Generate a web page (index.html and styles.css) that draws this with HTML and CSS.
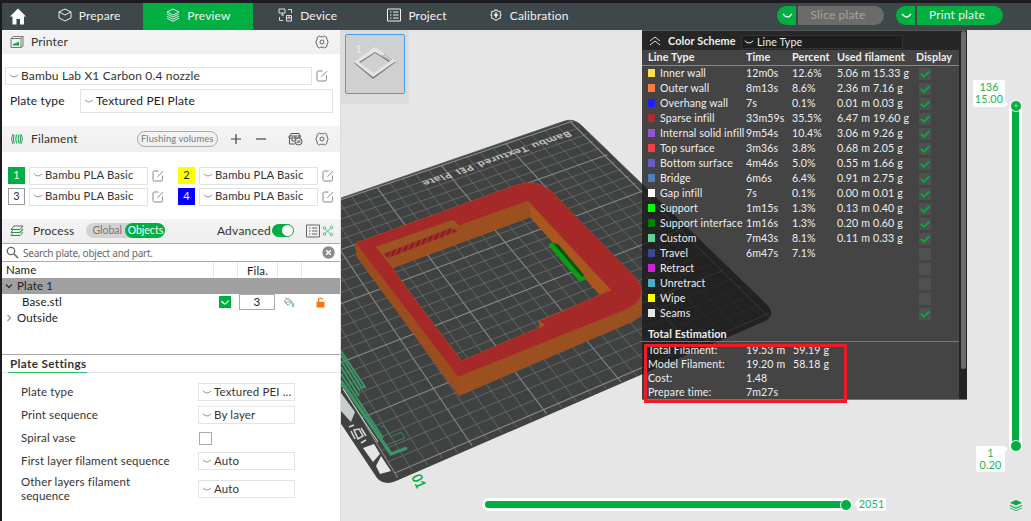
FILE: index.html
```html
<!DOCTYPE html>
<html lang="en">
<head>
<meta charset="utf-8">
<title>Base.stl</title>
<link rel="stylesheet" href="styles.css">
</head>
<body>
<svg width="0" height="0" class="defs">
  <symbol id="chev" viewBox="0 0 10 6"><path d="M.8 1.800Q3 4 5 4T9.200 1.800" fill="none" stroke="currentColor"/></symbol>
  <symbol id="edit" viewBox="0 0 12 12"><path d="M6.500 1H2.500Q1 1 1 2.500V9.500Q1 11 2.500 11H9Q10.500 11 10.500 9.500V5.500M5.500 6.800L11 1.200" fill="none" stroke="#858585"/></symbol>
  <symbol id="gear" viewBox="0 0 14 14"><path d="M4.300 1L5.300 1.700H8.700L9.700 1L11.800 2.500V4L13.200 7L11.800 10V11.500L9.700 13L8.700 12.300H5.300L4.300 13L2.200 11.500V10L.8 7L2.200 4V2.500Z" fill="none" stroke="#666"/><circle cx="7" cy="7" r="2" fill="none" stroke="#666"/></symbol>
  <symbol id="layers" viewBox="0 0 14 14"><path d="M7 1L13 4L7 7L1 4ZM1 6L7 9L13 6M1 8.200L7 11.200L13 8.200M1 10.300L7 13.300L13 10.300" fill="none" stroke="currentColor" stroke-width=".9"/></symbol>
  <symbol id="list" viewBox="0 0 14 14"><path d="M.5 1H13.500V13H.5ZM3 4H4.500M6 4H11.500M3 7H4.500M6 7H11.500M3 10H4.500M6 10H11.500" fill="none" stroke="currentColor"/></symbol>
  <symbol id="tick" viewBox="0 0 12 12"><path d="M2 6L5 8.800L10.200 3.500" fill="none" stroke="currentColor" stroke-width="1.800"/></symbol>
</svg>
<div class="app">
  <header class="topbar">
    <div class="home"><svg width="18" height="17" viewBox="0 0 18 17"><path d="M9 .5L17 8.500H15V16.500H11V11H7.500V16.500H3.500V8.500H1Z" fill="#fff"/></svg></div>
    <nav class="tabs">
      <a class="tab"><svg width="14" height="14" viewBox="0 0 14 14"><path d="M7 1L13 3.800V10L7 13L1 10V3.800ZM1 3.800L7 7L13 3.800" fill="none" stroke="#eee"/></svg>Prepare</a>
      <a class="tab active"><svg width="14" height="14"><use href="#layers"/></svg>Preview</a>
      <a class="tab"><svg width="15" height="14" viewBox="0 0 15 14"><path d="M1 1H7V5H1ZM3 7H6M4.500 5V7M10 1.500H13.500V5M1.500 9V12.500H5M8.500 7.500H13.500V13H8.500ZM8.500 10H13.500M11 7.500V10" fill="none" stroke="#ddd"/></svg>Device</a>
      <a class="tab"><svg width="14" height="14"><use href="#list"/></svg>Project</a>
      <a class="tab cal"><svg width="12" height="12" viewBox="0 0 14 14"><path d="M7 .8L9 2.300L12 3V6L13 7L12 8V11L9 11.800L7 13.200L5 11.800L2 11V8L1 7L2 6V3L5 2.300Z" fill="none" stroke="#eee" stroke-width="1.200"/><path d="M7 3.800V10.200M4.500 7H9.500" stroke="#eee" stroke-width="1.800"/></svg>Calibration</a>
    </nav>
    <div class="actions">
      <div class="split"><b class="drop"><svg width="11" height="7" viewBox="0 0 11 7"><path d="M1 2Q3.500 5 5.500 5T10 2" fill="none" stroke="#fff" stroke-width="1.300"/></svg></b><span class="act off">Slice plate</span></div>
      <div class="split"><b class="drop"><svg width="11" height="7" viewBox="0 0 11 7"><path d="M1 2Q3.500 5 5.500 5T10 2" fill="none" stroke="#fff" stroke-width="1.300"/></svg></b><span class="act">Print plate</span></div>
    </div>
  </header>

  <main class="work">
    <aside class="side">
      <div class="bar printer"><svg width="14" height="14" viewBox="0 0 14 14"><path d="M1 3.500L3.500 1.500H13V11L11 12.500H1ZM1 3.500H11V12.500M11 3.500L13 1.500" fill="none" stroke="#777"/><path d="M3 10.500V9L6 8L9 6.500V10.500Z" fill="#00ae42"/></svg><h2>Printer</h2><svg class="end" width="14" height="14"><use href="#gear"/></svg></div>
      <div class="row machine"><div class="select"><svg width="10" height="6"><use href="#chev"/></svg>Bambu Lab X1 Carbon 0.4 nozzle</div><svg width="12" height="12"><use href="#edit"/></svg></div>
      <div class="row plate"><label>Plate type</label><div class="select"><svg width="10" height="6"><use href="#chev"/></svg>Textured PEI Plate</div></div>
      <div class="bar filament"><svg width="14" height="14" viewBox="0 0 14 14"><path d="M3 2Q0 7 3 12M11 2Q14 7 11 12" fill="none" stroke="#777"/><path d="M4 2.500Q3 7 4 11.500M6.500 2.500Q5 7 6.500 11.500M8.500 2.500Q7.500 7 9 11.500M10 3Q11 7 10 11" fill="none" stroke="#00ae42"/></svg><h2>Filament</h2>
        <span class="flush">Flushing volumes</span>
        <svg class="plus" width="12" height="12" viewBox="0 0 12 12"><path d="M1 6H11M6 1V11" stroke="#444" stroke-width="1.200"/></svg>
        <svg class="minus" width="12" height="12" viewBox="0 0 12 12"><path d="M1 6H11" stroke="#444" stroke-width="1.200"/></svg>
        <svg class="ams" width="15" height="14" viewBox="0 0 15 14"><path d="M2 4L3 1.500H11L12 4M1 4H13M1 4V6H12V4M1.500 6V12H7M4 6V9M4 9H7M7 4V7" fill="none" stroke="#555"/><circle cx="10.500" cy="9.500" r="3.500" fill="#f3f3f3" stroke="#555"/><path d="M8.700 9H12.300L11.300 8M12.300 10.300H8.700L9.700 11.300" fill="none" stroke="#555" stroke-width=".8"/></svg>
        <svg width="14" height="14"><use href="#gear"/></svg></div>
      <div class="spools">
        <div class="spool"><b class="sw s1">1</b><div class="select"><svg width="10" height="6"><use href="#chev"/></svg>Bambu PLA Basic</div><svg width="12" height="12"><use href="#edit"/></svg></div>
        <div class="spool"><b class="sw s2">2</b><div class="select"><svg width="10" height="6"><use href="#chev"/></svg>Bambu PLA Basic</div><svg width="12" height="12"><use href="#edit"/></svg></div>
        <div class="spool"><b class="sw s3">3</b><div class="select"><svg width="10" height="6"><use href="#chev"/></svg>Bambu PLA Basic</div><svg width="12" height="12"><use href="#edit"/></svg></div>
        <div class="spool"><b class="sw s4">4</b><div class="select"><svg width="10" height="6"><use href="#chev"/></svg>Bambu PLA Basic</div><svg width="12" height="12"><use href="#edit"/></svg></div>
      </div>
      <div class="bar process"><svg width="14" height="14" viewBox="0 0 14 14"><path d="M4 2H13L10 5.500H1Z" fill="none" stroke="#666"/><path d="M1 8.500H10L13 5" fill="none" stroke="#00ae42" stroke-width="1.200"/><path d="M1 8.500L2.500 6.500M1 11.500H10L13 8M1 11.500L2.500 9.500" fill="none" stroke="#666"/></svg><h2>Process</h2>
        <div class="seg"><span>Global</span><span class="on">Objects</span></div>
        <span class="adv">Advanced</span><i class="toggle"></i>
        <svg class="plist" width="14" height="14"><use href="#list"/></svg>
        <svg class="tune" width="12" height="12" viewBox="0 0 12 12"><path d="M3.500 4L8.500 9M3.500 8L8.500 3.500" fill="none" stroke="#58bd80"/><g fill="none" stroke="#58bd80"><circle cx="2.500" cy="3" r="1.300"/><circle cx="2.500" cy="9" r="1.300"/><circle cx="9.500" cy="2.500" r="1.300"/><circle cx="9.500" cy="9.500" r="1.300"/></g></svg></div>
      <div class="search"><svg width="13" height="13" viewBox="0 0 13 13"><circle cx="5" cy="5" r="3.700" fill="none" stroke="#666" stroke-width="1.300"/><path d="M8 8L12 12" stroke="#666" stroke-width="1.600"/></svg><span>Search plate, object and part.</span><svg class="end" width="13" height="13" viewBox="0 0 13 13"><circle cx="6.500" cy="6.500" r="6.200" fill="#8b8b8b"/><path d="M4.200 4.200L8.800 8.800M8.800 4.200L4.200 8.800" stroke="#fff" stroke-width="1.400"/></svg></div>
      <div class="tree">
        <div class="tr th"><span>Name</span><span></span><span>Fila.</span><span></span><span></span></div>
        <div class="tr sel"><span><svg width="8" height="8" viewBox="0 0 8 8"><path d="M1 2.500L4 5.500L7 2.500" fill="none" stroke="#333" stroke-width="1.300"/></svg>Plate 1</span></div>
        <div class="tr item"><span>Base.stl</span><span><i class="check"><svg width="12" height="12" viewBox="0 0 12 12"><path d="M2.500 5Q5 8 6 8T9.500 4.500" fill="none" stroke="#fff" stroke-width="1.200"/></svg></i></span><span><i class="num">3</i></span>
          <span><svg width="12" height="12" viewBox="0 0 12 12"><path d="M2 1L9 7M1 5L5 2L9.500 6L5 9.500Z" fill="none" stroke="#999" stroke-width=".8"/><path d="M2 6H8M10 7Q12 11 10 11T10 7M2.500 6.500L5 9" fill="none" stroke="#37bf6b" stroke-width=".8"/></svg></span>
          <span><svg width="9" height="11" viewBox="0 0 9 11"><path d="M2.500 5V3Q2.500 1 4.500 1T6.500 2.500" fill="none" stroke="#ff7010" stroke-width="1.200"/><path d="M.5 4.800H8.500V10.500H.5Z" fill="#ff7010"/></svg></span></div>
        <div class="tr"><span><svg width="8" height="8" viewBox="0 0 8 8"><path d="M2.500 1L5.500 4L2.500 7" fill="none" stroke="#999" stroke-width="1.200"/></svg>Outside</span></div>
      </div>
      <h3><span>Plate Settings</span></h3>
      <div class="settings">
        <label>Plate type</label><div class="select"><svg width="10" height="6"><use href="#chev"/></svg>Textured PEI ...</div>
        <label>Print sequence</label><div class="select"><svg width="10" height="6"><use href="#chev"/></svg>By layer</div>
        <label>Spiral vase</label><i class="box"></i>
        <label>First layer filament sequence</label><div class="select"><svg width="10" height="6"><use href="#chev"/></svg>Auto</div>
        <label>Other layers filament<br>sequence</label><div class="select"><svg width="10" height="6"><use href="#chev"/></svg>Auto</div>
      </div>
    </aside>

    <section class="view">
      <svg class="scene" width="690" height="491" viewBox="341 30 690 491">
        <defs>
          <pattern id="top" width="3" height="3" patternUnits="userSpaceOnUse" patternTransform="rotate(-20)"><rect width="3" height="3" fill="#ac2a2a"/><path d="M0 1H3" stroke="#932424" stroke-width=".8"/></pattern>
          <pattern id="wall" width="3" height="2.500" patternUnits="userSpaceOnUse" patternTransform="rotate(-20)"><rect width="3" height="3" fill="#a05321"/><path d="M0 1H3" stroke="#8e471a" stroke-width=".7"/></pattern>
          <pattern id="ridge" width="5" height="9" patternUnits="userSpaceOnUse" patternTransform="rotate(20)"><rect width="5" height="9" fill="#a82a2a"/><path d="M1 0V9" stroke="#6e2020" stroke-width="1.600"/></pattern>
        </defs>
        <path d="M300 212L565 121Q574 118 582 126L767 305Q776 315 765 321L396 481Q384 486 377 478L300 362Z" fill="#404242"/>
        <g id="grid" fill="none"></g>
        <path d="M341 198L565 121Q574 118 582 126L767 305Q776 315 765 321" fill="none" stroke="#5d5f5f" stroke-width="1"/>
        <text class="platename" transform="matrix(-.945 .325 -.5 -.5 568.500 131)" textLength="156" lengthAdjust="spacingAndGlyphs">Bambu Textured PEI Plate</text>
        <path d="M341 393L355 412L351 422L341 411Z" fill="#c9cccd"/>
        <g fill="none" stroke="#d8dada" stroke-width="1.500"><path d="M354 430L359 429L363 436L358 439ZM349 427L354 425M361 443L366 440M351 431L355 439M361 428L366 436"/><path d="M343 389L378 442" stroke-width="1"/></g>
        <path d="M363 448L374 444L380 454L373 462ZM376 466L381 456L391 471L380 474Z" fill="#e6e6e6"/>
        <g fill="none" stroke="#3c9566"><path d="M341 351L365 387L360 388M341 355L362 388M341 361L360 391M341 367L359 396M341 374L383 438" stroke-width="2"/><path d="M341 381L391 454L407 448" stroke-width="3.200"/><path d="M381 427L384 426L391 437L401 432L405 438L386 445" stroke-width=".8"/></g>
        <text class="plateno" transform="matrix(.35 .72 -.9 .38 411 477)">01</text>
        <path fill="url(#wall)" fill-rule="evenodd" d="M355.500 243L516 185L642 291V314Q637 321 623 326L459 396L357 257ZM393 268L530 217L600 295L563 311L539 321L540 327L461.700 361L408 290Z"/>
        <path d="M355.500 243L458 377L459 396L357 257Z" fill="#9c4d20"/>
        <path d="M528 201L611 290L600 295L530 217Z" fill="#a9571f"/>
        <path fill="url(#top)" stroke="#a34c24" stroke-width=".6" fill-rule="evenodd" d="M355.500 243L516.500 185Q537 178 552 192L635 277Q646 289 639 300Q634 307 620 312L458 377ZM376 247L453 220L459 226L528 201L611 290L563 311L539 321L540 327L461.700 361L408 290L393 268Z"/>
        <path d="M376 247L453 220L459 226L458 231L393 268Z" fill="#9c5422"/>
        <path d="M458 226L529 201L531 217L393 268L386 259Z" fill="url(#wall)"/>
        <path d="M383 254L451 228L458 231L388 258Z" fill="url(#ridge)"/>
        <path d="M538.500 320.500L545 325L540 328Z" fill="#a9571f"/>
        <path d="M548 245L553 242L585 277L585 280L580 282Z" fill="#0a9e10"/>
        <path d="M553 243L558 244L584 275L582 277Z" fill="#07550a"/>
      </svg>

      <div class="thumbs"><div class="thumb"><b>1</b><svg width="44" height="34" viewBox="0 0 44 34"><path d="M1 16L22 1L43 15L20 32ZM7 16L21 27L36 15L22 6Z" fill="#7c7c7c" fill-rule="evenodd"/><path d="M1 15L22 0L43 14L20 30ZM6 15L21 26L37 14L22 5Z" fill="#e4e4e4" fill-rule="evenodd"/><path d="M29 8L37 14M31 7L39 13" stroke="#888" stroke-width=".8"/></svg></div></div>

      <div class="legend">
        <div class="lmain">
          <div class="lhead"><svg width="12" height="10" viewBox="0 0 12 10"><path d="M1 5L6 1L11 5M1 9L6 5L11 9" fill="none" stroke="#ddd"/></svg><b>Color Scheme</b><div class="scheme"><svg width="10" height="6"><use href="#chev"/></svg>Line Type</div></div>
          <div class="lr lth"><span class="two">Line Type</span><span>Time</span><span>Percent</span><span class="two">Used filament</span><span>Display</span></div>
          <div id="lines"></div>
          <div class="total">Total Estimation</div>
          <div class="sums">
            <span>Total Filament:</span><span>19.53 m</span><span>59.19 g</span>
            <span>Model Filament:</span><span>19.20 m</span><span>58.18 g</span>
            <span>Cost:</span><span>1.48</span><span></span>
            <span>Prepare time:</span><span>7m27s</span><span></span>
          </div>
        </div>
        <div class="lscroll"><i></i></div>
      </div>
      <div class="mark"></div>

      <div class="vtrack"><i></i></div>
      <span class="knob k1">+</span><span class="knob k2"></span>
      <div class="tip t1">136<br>15.00</div>
      <div class="tip t2">1<br>0.20</div>
      <div class="htrack"><i></i></div><span class="knob k3"></span>
      <div class="tip t3">2051</div>
      <svg class="stack" width="12" height="11" viewBox="0 0 12 11"><path d="M6 0L12 2.700L6 5.500L0 2.700ZM0 5L6 7.500L12 5V6L6 8.700L0 6ZM0 7.800L6 10.200L12 7.800V8.500L6 11L0 8.500Z" fill="#00ae42"/></svg>
    </section>
  </main>
</div>
<script src="app.js"></script>
</body>
</html>
```
FILE: styles.css
```css
* { box-sizing: border-box; }
body { margin: 0; background: #1b1b20; font: 12px Lato, "Open Sans", sans-serif; color: #333; letter-spacing: .15px; }
.defs { position: absolute; }
svg { flex: none; display: block; }
i, b { font-style: normal; }
.app { width: 1031px; height: 521px; padding: 3px 0 0 2px; display: flex; flex-direction: column; overflow: hidden; }
.topbar { height: 27px; flex: none; display: flex; background: #3e4749; color: #f2f2f2; }
.home { width: 32px; display: flex; align-items: center; justify-content: center; }
.tabs { display: flex; }
.tab { width: 109.300px; display: flex; align-items: center; justify-content: center; gap: 7px; padding: 0 0 3px 1px; }
.tab.active { background: #00ae42; }
.tab.cal { width: 115px; gap: 8px; }
.actions { margin-left: auto; padding: 3px 28px 0 0; display: flex; gap: 12px; }
.split { display: flex; gap: 2px; height: 19px; }
.drop { width: 19px; background: #00ae42; border-radius: 10px 0 0 10px; display: flex; align-items: center; justify-content: center; padding-left: 2px; }
.act { width: 86px; background: #00ae42; border-radius: 0 10px 10px 0; line-height: 18px; text-align: center; padding-right: 6px; }
.act.off { background: #6b6b6b; color: #a3a3a3; }

.work { flex: 1; display: flex; min-height: 0; }
.side { width: 339px; background: #fff; border-right: 1px solid #ddd; display: flex; flex-direction: column; }
.bar { display: flex; align-items: center; padding: 0 11px 1px 8px; background: linear-gradient(#f4f4f4, #efefef); flex: none; }
.bar h2 { font-size: 12px; font-weight: 400; margin: 0 0 0 7px; padding-bottom: 1px; }
.bar .end { margin-left: auto; }
.printer { height: 24px; }
.filament { height: 26px; margin-top: 13px; }
.process { height: 24px; margin-top: 14px; padding-right: 6px; }
.process h2 { margin-left: 9px; }
.select { border: 1px solid #e3e3e3; display: flex; align-items: center; gap: 2px; padding: 0 0 1px 3px; white-space: nowrap; background: #fff; }
.select svg { color: #999; }
.row { display: flex; align-items: center; flex: none; }
.machine { margin-top: 13px; height: 18px; padding-left: 3px; gap: 4px; }
.machine .select { width: 307px; height: 18px; font-size: 12px; }
.plate { margin-top: 4px; height: 24px; padding-left: 8px; color: #222; }
.plate label { width: 70px; padding-bottom: 2px; }
.plate .select { width: 253px; height: 24px; }
.flush { width: 81px; height: 16px; border: 1px solid #aaa; border-radius: 8px; font-size: 9.300px; line-height: 13px; text-align: center; color: #777; margin-left: 59px; }
.plus { margin-left: 12px; }
.minus { margin-left: 13px; }
.ams { margin: 0 12px 0 auto; }
.spools { display: grid; grid-template-columns: 156px 156px; gap: 4px 14px; padding: 15px 0 0 6px; }
.spool { height: 17px; display: flex; align-items: center; font-size: 11px; }
.sw { width: 17px; height: 17px; line-height: 16px; text-align: center; font-weight: 400; margin-right: 4px; }
.s1 { background: #00ae42; color: #fff; }
.s2 { background: #ff0; color: #222; }
.s3 { background: #fff; border: 1px solid #999; line-height: 14px; }
.s4 { background: #00f; color: #fff; }
.spool .select { width: 119px; height: 18px; margin-right: 4px; font-size: 11.300px; padding-left: 3px; padding-bottom: 2px; }
.seg { margin-left: 12px; height: 15px; display: flex; background: #d3d3d3; border-radius: 8px; font-size: 10.500px; line-height: 14px; color: #777; letter-spacing: 0; }
.seg span { width: 39px; padding-left: 6px; }
.seg .on { width: 40px; padding: 0; text-align: center; background: #00ae42; color: #fff; border-radius: 8px; }
.adv { margin-left: auto; margin-right: 1px; padding-bottom: 1px; letter-spacing: .25px; }
.toggle { width: 22px; height: 13px; background: #00ae42; border-radius: 7px; border: 1px solid #00ae42; display: flex; justify-content: flex-end; }
.toggle::after { content: ""; width: 11px; height: 11px; border-radius: 50%; background: #fff; }
.plist { margin-left: 12px; color: #666; }
.tune { margin-left: 2px; }
.search { height: 19px; flex: none; border: 1px solid #aaa; border-width: 1px 0; display: flex; align-items: center; padding: 0 5px 0 4px; gap: 4px; font: 10px "Noto Sans", sans-serif; letter-spacing: -.25px; color: #666; }
.search .end { margin-left: auto; }
.tree { height: 93px; flex: none; border-bottom: 1px solid #aaa; font-size: 11.500px; color: #222; }
.tr { display: grid; grid-template-columns: 211px 24px 40px 24px 39px; height: 16px; align-items: stretch; }
.tr span { display: flex; align-items: center; justify-content: center; }
.tr span:first-child { justify-content: flex-start; padding-left: 3px; gap: 4px; white-space: nowrap; padding-bottom: 1px; }
.tree .th span:first-child { padding-left: 4px; }
.th span + span { border-left: 1px solid #e8e8e8; }
.sel { background: #a0a0a0; }
.tree .item span:first-child { padding-left: 20px; }
.check { width: 12px; height: 12px; background: #00ae42; }
.num { width: 36px; height: 16px; border: 1px solid #aaa; text-align: center; line-height: 13px; }
h3 { margin: 0; height: 18px; flex: none; border-bottom: 1px solid #e2e2e2; padding-left: 6px; font-size: 11.700px; line-height: 16px; color: #333; display: flex; letter-spacing: .35px; }
h3 span { border-bottom: 1.500px solid #2fbe66; padding: 0 1px 0 2px; height: 18px; }
.settings { display: grid; grid-template-columns: 177px 97px; grid-template-rows: 18px 18px 18px 18px 28px; row-gap: 5px; padding: 10px 0 0 19px; align-items: center; font-size: 11.500px; line-height: 13.500px; }
.settings label { padding-bottom: 1px; }
.settings .select { height: 18px; padding-left: 3px; }
.box { width: 13px; height: 13px; border: 1px solid #aaa; margin-left: 1px; }

.view { position: relative; flex: 1; background: #e6e6e6; overflow: hidden; }
.scene { position: absolute; left: 0; top: 0; }
.platename { font: bold 13px "Open Sans", sans-serif; fill: #b9bbbb; word-spacing: 3px; }
.plateno { font: bold 15px Lato, sans-serif; fill: #00ae42; letter-spacing: 0; }
.thumbs { position: absolute; left: 0; top: 0; width: 68px; height: 74px; background: #dcdcdc; padding: 4px; border-radius: 0 0 2px 0; }
.thumb { width: 60px; height: 60px; border: 1.500px solid #419ff0; border-radius: 2px; background: #d0d0d0; position: relative; display: flex; align-items: center; justify-content: center; }
.thumb b { position: absolute; left: 9px; top: 6px; color: #eee; font-size: 12px; font-weight: 400; }
.legend { position: absolute; left: 301px; top: 0; width: 325px; height: 370px; display: flex; background: rgba(26, 26, 26, .795); color: #eee; font-size: 10.600px; letter-spacing: .1px; overflow: hidden; border-top: 1px solid #555; border-bottom: 1px solid #777; }
.lmain { flex: 1; }
.lhead { height: 19px; background: rgba(26, 26, 26, .7); display: flex; align-items: center; padding-left: 7px; gap: 7px; }
.lhead b { font-size: 10.800px; width: 66px; white-space: nowrap; padding-bottom: 1px; }
.scheme { width: 162px; height: 14px; background: #1f1f1f; border: 1px solid #333; display: flex; align-items: center; gap: 3px; padding-left: 2px; margin-top: 3px; }
.lr { display: grid; grid-template-columns: 12px 86px 46px 45px 36px 43px 40px; height: 15px; padding-left: 6px; align-items: center; white-space: nowrap; }
.lr span { padding-bottom: 1px; }
.lth { height: 16px; font-weight: 700; border-bottom: 1px solid #888; line-height: 14px; font-size: 10.800px; }
.two { grid-column: span 2; }
.lr i { width: 7px; height: 8px; margin-top: -2px; }
.cb { width: 12px; height: 12px; background: #505050; color: #00ae42; margin-left: 3px; }
.total { height: 21px; line-height: 25px; padding-left: 6px; font-weight: 700; font-size: 10.800px; border-bottom: 1px solid #777; }
.sums { display: grid; grid-template-columns: 98px 47px auto; grid-auto-rows: 14px; padding: 1px 0 0 6px; line-height: 14px; }
.lscroll { width: 8px; background: #242424; padding: 0 1px 0 2px; }
.lscroll i { display: block; height: 338px; background: #6c6c6c; border-radius: 3px; }
.mark { position: absolute; left: 303px; top: 314px; width: 203px; height: 59px; border: 3px solid #ee1c25; }
.vtrack { position: absolute; left: 668px; top: 71px; width: 13px; height: 350px; background: #fff; border-radius: 7px; padding: 5px 3px; }
.htrack { position: absolute; left: 141px; top: 468px; width: 370px; height: 13px; background: #fff; border-radius: 7px; padding: 3px; }
.vtrack i, .htrack i { display: block; height: 100%; background: #00ae42; border-radius: 3px; }
.knob { position: absolute; width: 12px; height: 12px; border-radius: 50%; background: #00ae42; border: 1px solid #fff; color: #9ddfb5; font-size: 10px; line-height: 9px; text-align: center; }
.k1 { left: 669px; top: 70px; }
.k2 { left: 669px; top: 410px; }
.k3 { left: 499px; top: 469px; }
.tip { position: absolute; background: #fff; border-radius: 2px; color: #1ab556; font-size: 10.800px; line-height: 12px; text-align: center; }
.t1 { left: 632px; top: 50px; width: 32px; height: 27px; padding-top: 1px; }
.t2 { left: 635px; top: 416px; width: 29px; height: 26px; padding-top: 1px; }
.t3 { left: 516px; top: 468px; width: 29px; height: 13px; }
.tip::after { content: ""; position: absolute; right: -3px; border: 3px solid transparent; border-right-width: 0; border-left-color: #fff; }
.t1::after { bottom: 0; }
.t2::after { top: 0; }
.t3::after { right: auto; left: -3px; top: 3px; border-width: 3px 3px 3px 0; border-right-color: #fff; }
.stack { position: absolute; left: 669px; top: 470px; }
```
FILE: app.js
```js
// Build plate grid: 10 mm cells, every 50 mm emphasised.
const lerp = (a, b, t) => a + (b - a) * t;
const depth = mm => { const s = mm / 256; return s / (s + (1 - s) * 1.183); };
const point = (u, v) => {
  const t = depth(v);
  return [lerp(248 + u * 1.29, 399 + u * 1.492, t), lerp(231 - u * 0.436, 480 - u * 0.64, t)];
};
let thin = '', bold = '';
const add = (major, a, b) => {
  const d = `M${a[0].toFixed(1)} ${a[1].toFixed(1)}L${b[0].toFixed(1)} ${b[1].toFixed(1)}`;
  if (major) bold += d; else thin += d;
};
for (let mm = 0; mm <= 250; mm += 10) {
  add(mm % 50 === 0, point(mm, 0), point(mm, 254));
  add(mm % 50 === 0, point(0, mm), point(252, mm));
}
document.getElementById('grid').innerHTML =
  `<path d="${thin}" stroke="#6c6e6e" stroke-width=".8"/><path d="${bold}" stroke="#868888" stroke-width="1.1"/>`;

// Line type table: colour, name, time, percent, length, weight, shown
const lines = [
  ['#ffe04a', 'Inner wall', '12m0s', '12.6%', '5.06 m', '15.33 g', 1],
  ['#ff7a38', 'Outer wall', '8m13s', '8.6%', '2.36 m', '7.16 g', 1],
  ['#1f1fff', 'Overhang wall', '7s', '0.1%', '0.01 m', '0.03 g', 1],
  ['#b02c28', 'Sparse infill', '33m59s', '35.5%', '6.47 m', '19.60 g', 1],
  ['#9452cc', 'Internal solid infill', '9m54s', '10.4%', '3.06 m', '9.26 g', 1],
  ['#f24040', 'Top surface', '3m36s', '3.8%', '0.68 m', '2.05 g', 1],
  ['#665cc7', 'Bottom surface', '4m46s', '5.0%', '0.55 m', '1.66 g', 1],
  ['#4d80ba', 'Bridge', '6m6s', '6.4%', '0.91 m', '2.75 g', 1],
  ['#ffffff', 'Gap infill', '7s', '0.1%', '0.00 m', '0.01 g', 1],
  ['#00ff00', 'Support', '1m15s', '1.3%', '0.13 m', '0.40 g', 1],
  ['#008000', 'Support interface', '1m16s', '1.3%', '0.20 m', '0.60 g', 1],
  ['#5ed194', 'Custom', '7m43s', '8.1%', '0.11 m', '0.33 g', 1],
  ['#38489b', 'Travel', '6m47s', '7.1%', '', '', 0],
  ['#cd22d6', 'Retract', '', '', '', '', 0],
  ['#49adcf', 'Unretract', '', '', '', '', 0],
  ['#ffff00', 'Wipe', '', '', '', '', 0],
  ['#e6e6e6', 'Seams', '', '', '', '', 1]
];
document.getElementById('lines').innerHTML = lines.map(([c, ...r]) =>
  `<div class="lr"><i style="background:${c}"></i>` +
  r.slice(0, 5).map(t => `<span>${t}</span>`).join('') +
  `<b class="cb">${r[5] ? '<svg width="12" height="12"><use href="#tick"/></svg>' : ''}</b></div>`).join('');
```
